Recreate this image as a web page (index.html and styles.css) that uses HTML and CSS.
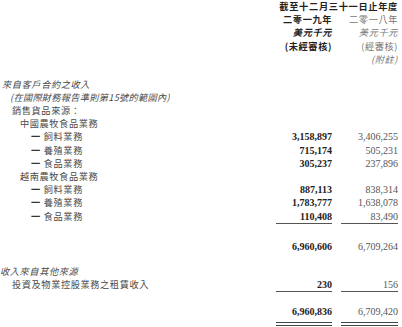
FILE: index.html
```html
<!DOCTYPE html>
<html lang="zh-Hant">
<head>
<meta charset="utf-8">
<link rel="stylesheet" href="styles.css">
</head>
<body>
<div class="sheet">
  <div class="row"><span></span><span class="c1 span2">截至十二月三十一日止年度</span></div>
  <div class="row"><span></span><span class="c1 hd">二零一九年</span><span class="c2 hd">二零一八年</span></div>
  <div class="row"><span></span><span class="c1 hd it">美元千元</span><span class="c2 hd it">美元千元</span></div>
  <div class="row"><span></span><span class="c1 hd">(未經審核)</span><span class="c2 hd">(經審核)</span></div>
  <div class="row"><span></span><span></span><span class="c2 hd it">(附註)</span></div>

  <div class="row gap-a"><span class="lbl it l0">來自客戶合約之收入</span></div>
  <div class="row"><span class="lbl it l1 tight">(在國際財務報告準則第15號的範圍內)</span></div>
  <div class="row"><span class="lbl l2">銷售貨品來源：</span></div>
  <div class="row"><span class="lbl l3">中國農牧食品業務</span></div>
  <div class="row"><span class="lbl l4"><i class="dash">一</i>飼料業務</span><span class="c1 num">3,158,897</span><span class="c2 num">3,406,255</span></div>
  <div class="row"><span class="lbl l4"><i class="dash">一</i>養殖業務</span><span class="c1 num">715,174</span><span class="c2 num">505,231</span></div>
  <div class="row"><span class="lbl l4"><i class="dash">一</i>食品業務</span><span class="c1 num">305,237</span><span class="c2 num">237,896</span></div>
  <div class="row"><span class="lbl l3">越南農牧食品業務</span></div>
  <div class="row"><span class="lbl l4"><i class="dash">一</i>飼料業務</span><span class="c1 num">887,113</span><span class="c2 num">838,314</span></div>
  <div class="row"><span class="lbl l4"><i class="dash">一</i>養殖業務</span><span class="c1 num">1,783,777</span><span class="c2 num">1,638,078</span></div>
  <div class="row"><span class="lbl l4"><i class="dash">一</i>食品業務</span><span class="c1 num ul">110,408</span><span class="c2 num ul">83,490</span></div>

  <div class="row gap-b"><span></span><span class="c1 num">6,960,606</span><span class="c2 num">6,709,264</span></div>

  <div class="row gap-c"><span class="lbl it l0b">收入來自其他來源</span></div>
  <div class="row"><span class="lbl l2">投資及物業控股業務之租賃收入</span><span class="c1 num ul">230</span><span class="c2 num ul">156</span></div>

  <div class="row gap-d last"><span></span><span class="c1 num dbl">6,960,836</span><span class="c2 num dbl">6,709,420</span></div>
</div>
</body>
</html>
```
FILE: styles.css
```css
html, body {
  margin: 0;
  padding: 0;
  background: #ffffff;
}

.sheet {
  display: flex;
  flex-direction: column;
  padding: 0 4px 0 0;
  font-family: "Noto Sans CJK TC", "Noto Sans CJK SC", sans-serif;
  font-size: 9.2px;
  color: #444;
}

.row {
  display: grid;
  grid-template-columns: 1fr 56px 57px;
  column-gap: 9px;
  height: 13.2px;
  line-height: 13.2px;
  flex: none;
}

.row span {
  white-space: nowrap;
  box-sizing: border-box;
}

.gap-a { margin-top: 11.8px; }
.gap-b { margin-top: 17px; }
.gap-c { margin-top: 11.8px; }
.gap-d { margin-top: 13.6px; }

.row.last {
  height: auto;
}

.span2 {
  grid-column: 2 / span 2;
  text-align: center;
  font-weight: 700;
  letter-spacing: 0.7px;
  color: #222;
}

.c1, .c2 {
  text-align: right;
}

.hd {
  letter-spacing: 0.6px;
}

.c1.hd {
  font-weight: 700;
  color: #222;
}

.c2.hd {
  color: #777;
  font-weight: 400;
}

.it {
  font-style: italic;
}

.lbl {
  letter-spacing: 0.6px;
  color: #4a4a4a;
}

.tight {
  letter-spacing: 0.3px;
}

.l0 { padding-left: 2px; }
.l0b { padding-left: 0; }
.l1 { padding-left: 10px; }
.l2 { padding-left: 12px; }
.l3 { padding-left: 20px; }
.l4 { padding-left: 31px; }

.dash {
  font-style: normal;
  font-weight: 700;
  color: #333;
  margin-right: 3px;
}

.num {
  font-family: "Liberation Serif", "Times New Roman", serif;
  font-size: 10px;
  letter-spacing: 0;
}

.c1.num {
  font-weight: 700;
  color: #222;
}

.c2.num {
  color: #555;
}

.ul {
  border-bottom: 1px solid #555;
}

.dbl {
  height: 21.2px;
  padding-bottom: 4px;
  border-bottom: 4px double #444;
}
```
